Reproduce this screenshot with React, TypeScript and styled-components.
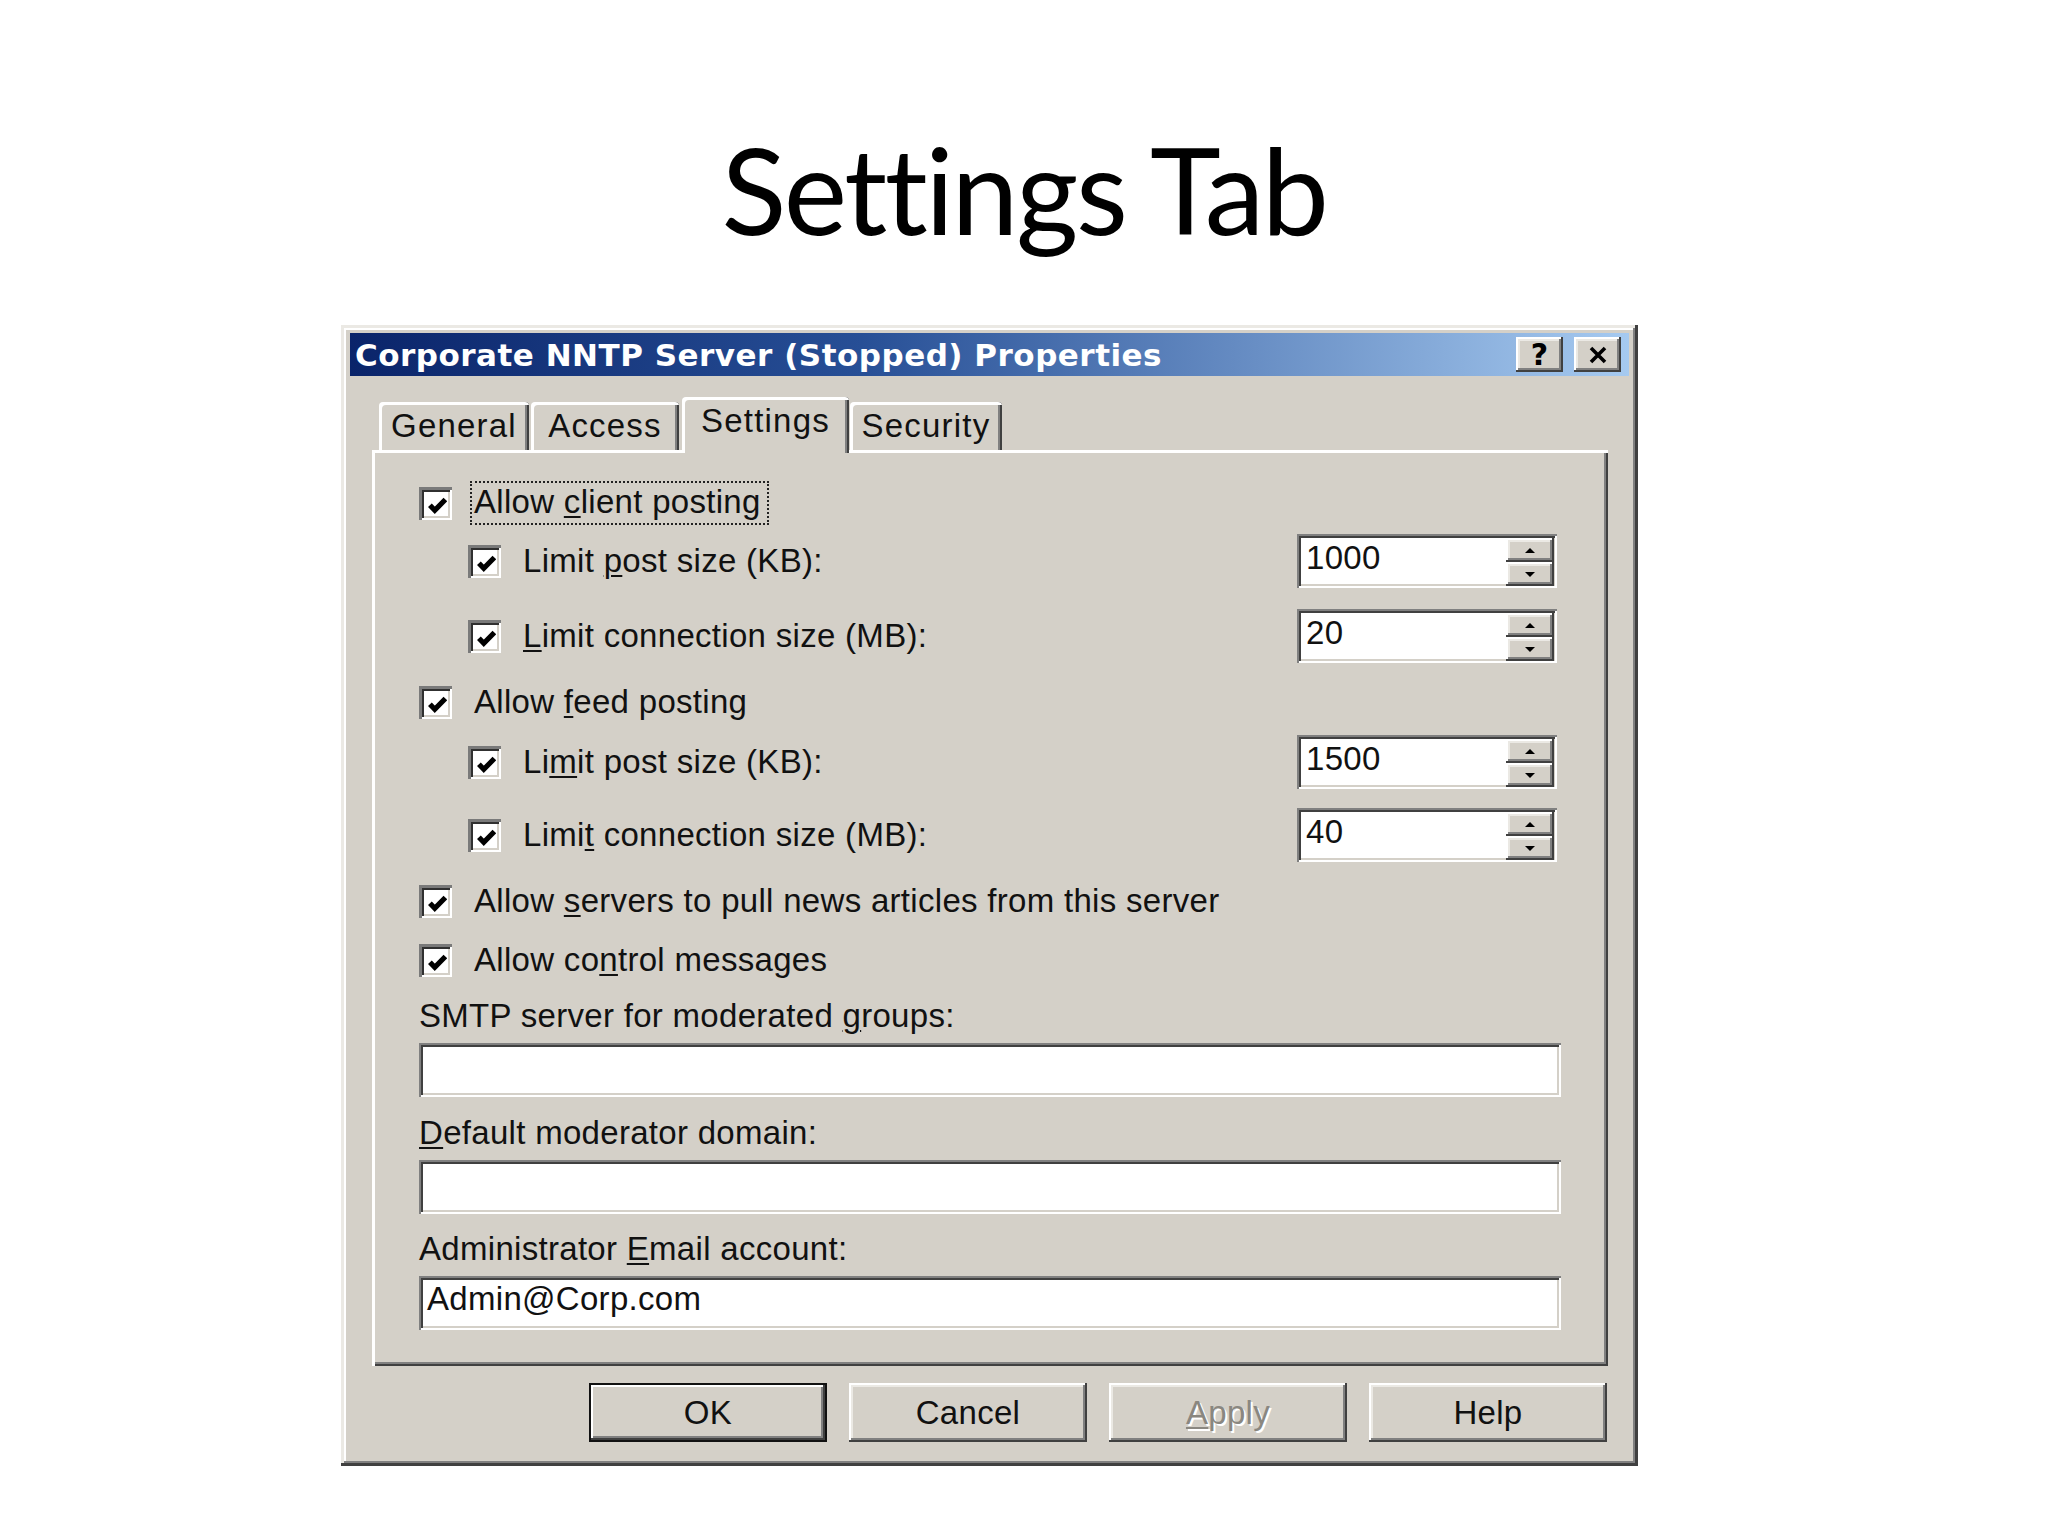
import React from 'react';
import styled, { createGlobalStyle, css } from 'styled-components';

const face = '#d4d0c8';

const GlobalStyle = createGlobalStyle`
  body {
    margin: 0;
    background: #ffffff;
  }
`;

// classic win2000 bevels
const raised = css`
  box-shadow: inset -2px -2px #404040, inset 2px 2px #ffffff,
    inset -4px -4px #808080, inset 4px 4px #ebe9e4;
`;
const sunken = css`
  box-shadow: inset 2px 2px #808080, inset -2px -2px #ffffff,
    inset 4px 4px #404040, inset -4px -4px ${face};
`;

const U = styled.span`
  text-decoration: underline;
  text-decoration-thickness: 2px;
  text-underline-offset: 3px;
`;

type Row = {
  label: React.ReactNode;
  nested?: boolean;
  value?: string;
  gap: number;
  focus?: boolean;
};

const rows: Row[] = [
  { label: <>Allow <U>c</U>lient posting</>, gap: 31, focus: true },
  { label: <>Limit <U>p</U>ost size (KB):</>, nested: true, value: '1000', gap: 9 },
  { label: <><U>L</U>imit connection size (MB):</>, nested: true, value: '20', gap: 21 },
  { label: <>Allow <U>f</U>eed posting</>, gap: 17 },
  { label: <>Li<U>m</U>it post size (KB):</>, nested: true, value: '1500', gap: 11 },
  { label: <>Limi<U>t</U> connection size (MB):</>, nested: true, value: '40', gap: 19 },
  { label: <>Allow <U>s</U>ervers to pull news articles from this server</>, gap: 17 },
  { label: <>Allow co<U>n</U>trol messages</>, gap: 15 },
];

const fields = [
  { label: <>SMTP server for moderated <U>g</U>roups:</>, value: '', gap: 16 },
  { label: <><U>D</U>efault moderator domain:</>, value: '', gap: 18 },
  { label: <>Administrator <U>E</U>mail account:</>, value: 'Admin@Corp.com', gap: 17 },
];

const tabs = [
  { name: 'General', width: 150 },
  { name: 'Access', width: 148 },
  { name: 'Settings', width: 167, active: true },
  { name: 'Security', width: 152 },
];

export default function App() {
  return (
    <>
      <GlobalStyle />
      <Page>
        <Heading>Settings Tab</Heading>
        <Dialog>
          <TitleBar>
            <TitleText>Corporate NNTP Server (Stopped) Properties</TitleText>
            <TitleButtons>
              <CaptionButton>
                <HelpGlyph>?</HelpGlyph>
              </CaptionButton>
              <CaptionButton>
                <svg width="20" height="18" viewBox="0 0 20 18">
                  <path d="M3 2 L17 16 M17 2 L3 16" stroke="#000" strokeWidth="3.6" />
                </svg>
              </CaptionButton>
            </TitleButtons>
          </TitleBar>
          <Body>
            <TabRow>
              {tabs.map((t) => (
                <Tab key={t.name} $active={t.active} $width={t.width}>
                  {t.name}
                </Tab>
              ))}
            </TabRow>
            <Panel>
              {rows.map((r, i) => (
                <OptionRow key={i} $nested={r.nested} $gap={r.gap}>
                  <CheckBox>
                    <svg width="19" height="19" viewBox="0 0 7 7">
                      <polyline
                        points="0.7,3.4 2.5,5.3 6.4,1.3"
                        fill="none"
                        stroke="#000"
                        strokeWidth="1.9"
                      />
                    </svg>
                  </CheckBox>
                  {r.focus ? <FocusLabel>{r.label}</FocusLabel> : <Label>{r.label}</Label>}
                  {r.value && (
                    <SpinBox>
                      <SpinValue>{r.value}</SpinValue>
                      <SpinButtons>
                        <SpinButton>
                          <Arrow $up />
                        </SpinButton>
                        <SpinButton>
                          <Arrow />
                        </SpinButton>
                      </SpinButtons>
                    </SpinBox>
                  )}
                </OptionRow>
              ))}
              {fields.map((f, i) => (
                <Field key={i} $gap={f.gap}>
                  <FieldLabel>{f.label}</FieldLabel>
                  <TextBox>{f.value}</TextBox>
                </Field>
              ))}
            </Panel>
            <ButtonRow>
              <Button $default>OK</Button>
              <Button>Cancel</Button>
              <Button $disabled>
                <U>A</U>pply
              </Button>
              <Button>Help</Button>
            </ButtonRow>
          </Body>
        </Dialog>
      </Page>
    </>
  );
}

const Page = styled.div`
  width: 2048px;
  height: 1536px;
  display: flex;
  flex-direction: column;
  align-items: flex-start;
  font-family: 'Liberation Sans', Arial, sans-serif;
  letter-spacing: 0.3px;
  color: #111;
`;
const Heading = styled.h1`
  align-self: center;
  margin: 129px 0 0;
  font-family: Lato, 'Open Sans', sans-serif;
  font-weight: 400;
  font-size: 120px;
  line-height: 120px;
  letter-spacing: -2.5px;
  color: #000;
`;
const Dialog = styled.div`
  margin: 76px 0 0 341px;
  width: 1297px;
  height: 1141px;
  box-sizing: border-box;
  padding: 8px 9px 24px;
  background: ${face};
  box-shadow: inset -3px -3px #404040, inset 3px 3px #ebe9e4,
    inset -5px -5px #808080, inset 5px 5px #ffffff;
  display: flex;
  flex-direction: column;
`;
const TitleBar = styled.div`
  height: 43px;
  display: flex;
  align-items: center;
  justify-content: space-between;
  padding: 0 8px 0 5px;
  background: linear-gradient(to right, #0a246a 0%, #274f96 40%, #a6caf0 100%);
`;
const TitleText = styled.span`
  font-family: 'DejaVu Sans', Verdana, sans-serif;
  font-weight: 700;
  font-size: 31px;
  color: #fff;
  letter-spacing: 0.5px;
`;
const TitleButtons = styled.div`
  display: flex;
  gap: 11px;
`;
const CaptionButton = styled.div`
  width: 47px;
  height: 35px;
  display: flex;
  align-items: center;
  justify-content: center;
  background: ${face};
  ${raised};
`;
const HelpGlyph = styled.span`
  font-family: 'DejaVu Sans', sans-serif;
  font-weight: 700;
  font-size: 30px;
  line-height: 1;
  color: #000;
`;
const Body = styled.div`
  padding: 0 21px 0 22px;
  display: flex;
  flex-direction: column;
`;
const TabRow = styled.div`
  margin-top: 21px;
  height: 53px;
  display: flex;
  align-items: flex-end;
  padding-left: 7px;
  gap: 2px;
`;
const Tab = styled.div<{ $active?: boolean; $width: number }>`
  position: relative;
  z-index: ${(p) => (p.$active ? 1 : 0)};
  width: ${(p) => p.$width}px;
  height: ${(p) => (p.$active ? 56 : 48)}px;
  margin: ${(p) => (p.$active ? '0 -1px -3px 1px' : '0')};
  padding-bottom: ${(p) => (p.$active ? 8 : 0)}px;
  box-sizing: border-box;
  display: flex;
  align-items: center;
  justify-content: center;
  font-size: 33px;
  letter-spacing: 1.2px;
  background: ${face};
  border-radius: 4px 4px 0 0;
  box-shadow: inset 3px 3px #ffffff, inset -2px 0 #404040, inset -4px 0 #808080;
`;
const Panel = styled.div`
  height: 916px;
  box-sizing: border-box;
  padding: 0 47px 0 47px;
  background: ${face};
  box-shadow: inset 3px 3px #ffffff, inset -2px -2px #404040,
    inset -4px -4px #808080;
  display: flex;
  flex-direction: column;
`;
const OptionRow = styled.div<{ $nested?: boolean; $gap: number }>`
  margin-top: ${(p) => p.$gap}px;
  height: ${(p) => (p.$nested ? 54 : 44)}px;
  padding-left: ${(p) => (p.$nested ? 49 : 0)}px;
  display: flex;
  align-items: center;
  font-size: 33px;
`;
const CheckBox = styled.div`
  width: 33px;
  height: 33px;
  flex: none;
  box-sizing: border-box;
  display: flex;
  align-items: center;
  justify-content: center;
  padding: 4px 0 0 4px;
  background: #fff;
  box-shadow: inset 3px 3px #7a7a7a, inset -2px -2px #ffffff,
    inset 5px 5px #303030, inset -4px -4px ${face};
  margin-right: 22px;
`;
const Label = styled.span`
  white-space: nowrap;
`;
const FocusLabel = styled.span`
  white-space: nowrap;
  margin: 0 0 0 -4px;
  padding: 0 6px 2px 2px;
  border: 2px dotted #222;
`;
const SpinBox = styled.div`
  margin-left: auto;
  margin-right: 4px;
  width: 260px;
  height: 54px;
  box-sizing: border-box;
  padding: 4px 3px 2px 9px;
  display: flex;
  align-items: stretch;
  background: #fff;
  ${sunken};
`;
const SpinValue = styled.span`
  flex: 1;
  padding-top: 3px;
  font-size: 33px;
  line-height: 34px;
`;
const SpinButtons = styled.div`
  width: 48px;
  display: flex;
  flex-direction: column;
`;
const SpinButton = styled.div`
  flex: 1;
  display: flex;
  align-items: center;
  justify-content: center;
  background: ${face};
  ${raised};
`;
const Arrow = styled.span<{ $up?: boolean }>`
  width: 0;
  height: 0;
  border-left: 5px solid transparent;
  border-right: 5px solid transparent;
  ${(p) => (p.$up ? 'border-bottom: 5px solid #000;' : 'border-top: 5px solid #000;')}
`;
const Field = styled.div<{ $gap: number }>`
  margin-top: ${(p) => p.$gap}px;
  display: flex;
  flex-direction: column;
  gap: 9px;
`;
const FieldLabel = styled.span`
  height: 36px;
  line-height: 36px;
  font-size: 33px;
  white-space: nowrap;
`;
const TextBox = styled.div`
  height: 54px;
  box-sizing: border-box;
  padding: 1px 8px 0;
  font-size: 33px;
  line-height: 44px;
  background: #fff;
  ${sunken};
`;
const ButtonRow = styled.div`
  margin-top: 17px;
  display: flex;
  justify-content: flex-end;
  gap: 22px;
  padding-right: 1px;
`;
const Button = styled.div<{ $default?: boolean; $disabled?: boolean }>`
  width: 238px;
  height: 59px;
  box-sizing: border-box;
  display: flex;
  align-items: center;
  justify-content: center;
  font-size: 33px;
  background: ${face};
  color: ${(p) => (p.$disabled ? '#8a8780' : '#111')};
  text-shadow: ${(p) => (p.$disabled ? '2px 2px #ffffff' : 'none')};
  ${(p) =>
    p.$default
      ? css`
          box-shadow: inset 0 0 0 2px #111, inset -4px -4px #404040,
            inset 4px 4px #ffffff, inset -6px -6px #808080;
        `
      : raised};
`;
